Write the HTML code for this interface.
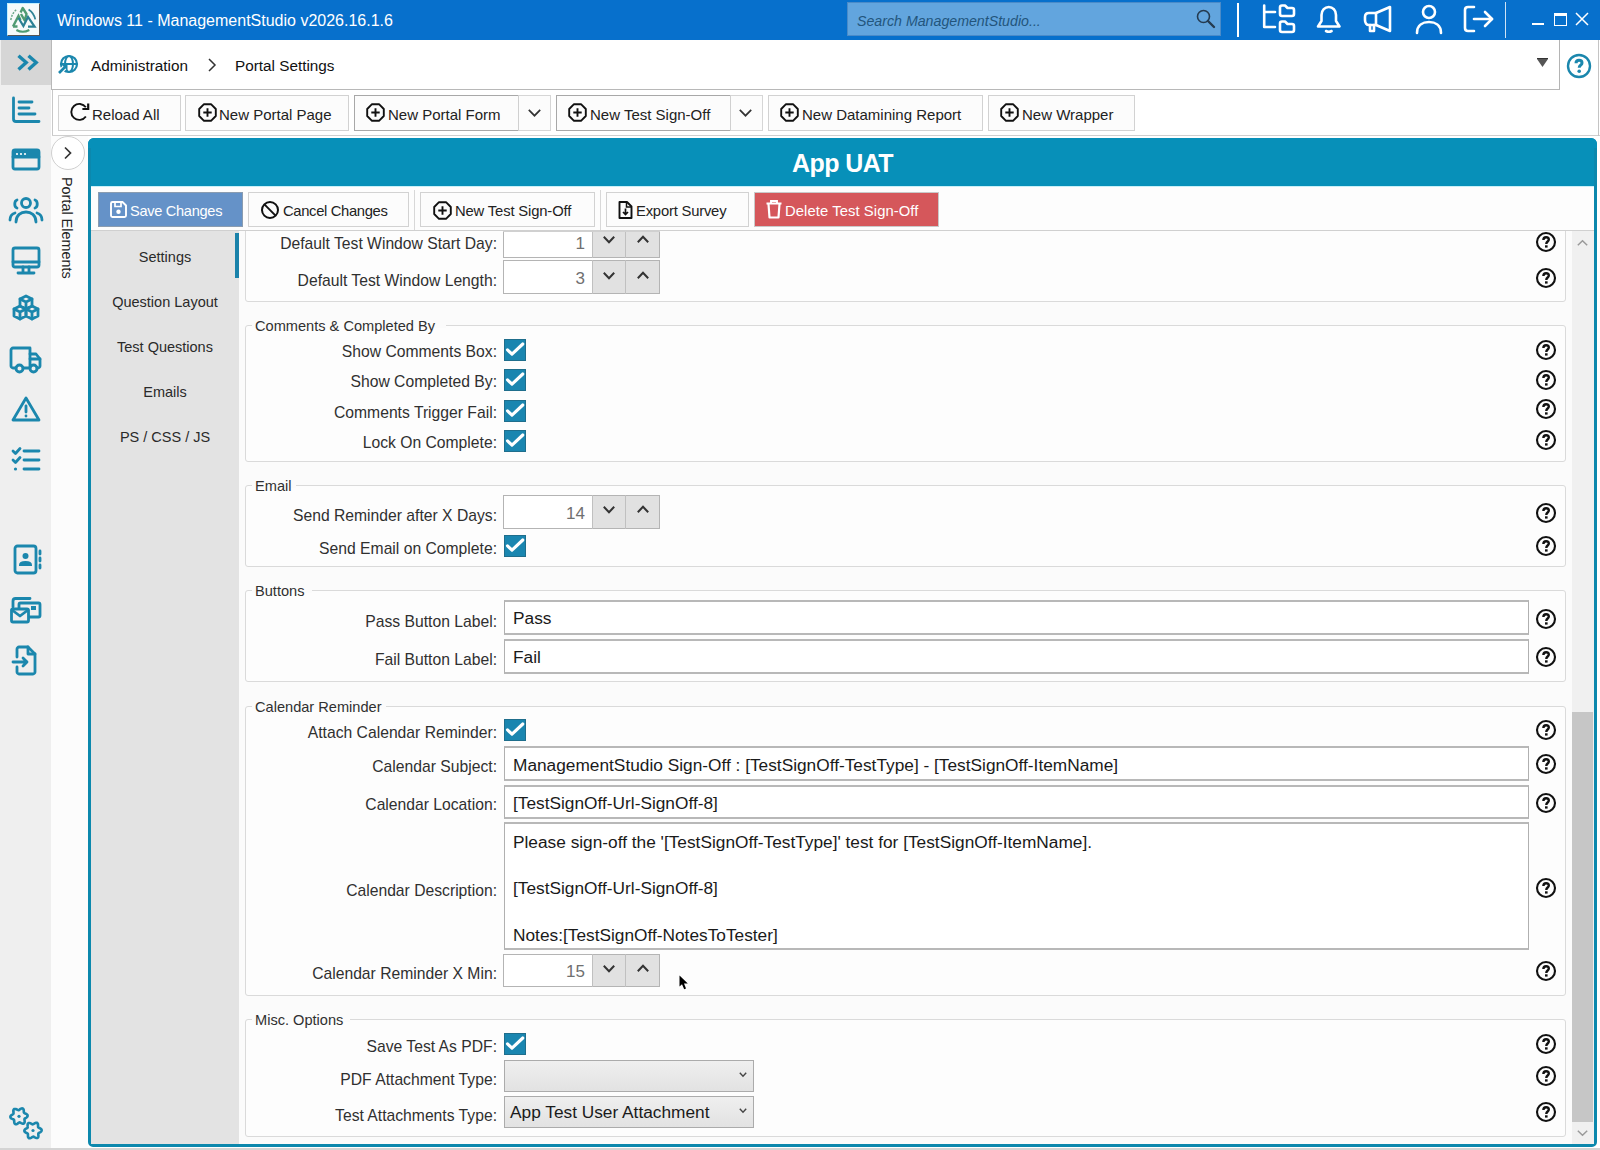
<!DOCTYPE html>
<html><head><meta charset="utf-8">
<style>
*{box-sizing:border-box;margin:0;padding:0}
html,body{width:1600px;height:1150px;overflow:hidden;background:#fff;font-family:"Liberation Sans",sans-serif;color:#222;font-size:15px}
.a{position:absolute}
svg.i{position:absolute;overflow:visible}
.t{position:absolute;white-space:nowrap;line-height:1}
#title{left:0;top:0;width:1600px;height:40px;background:#0770cc}
#sidebar{left:0;top:40px;width:51px;height:1110px;background:#efefef}
#sbtop{left:1px;top:40px;width:50px;height:45px;background:#d6d6d6}
#crumb{left:51px;top:40px;width:1509px;height:50px;background:#fff;border-bottom:1px solid #b8b8b8;border-left:1px solid #b8b8b8}
#toolbar{left:52px;top:90px;width:1548px;height:45px;background:#fff;border-left:1px solid #c8c8c8}
.tb{position:absolute;top:95px;height:36px;border:1px solid #d4d4d4;background:#fff}
</style></head><body>

<div id="title" class="a"></div>
<div class="a" style="left:7px;top:3px;width:33px;height:33px;background:#f6fafa;border-top:1px solid #bfefff;border-left:1px solid #bfefff;border-right:1px solid #555;border-bottom:1px solid #555"></div>
<svg class="i" style="left:7px;top:3px" width="32" height="32" viewBox="0 0 32 32">
<path d="M3.8 17 Q5 10 9.4 6.8" fill="none" stroke="#6aa889" stroke-width="1.5" stroke-dasharray="2 1.2"/>
<path d="M21.6 6.4 Q27 10 28.3 16.4" fill="none" stroke="#2f8496" stroke-width="1.8"/>
<path d="M6 23.5 H10.5 M6 23.5 L11.5 13 L13.5 17" fill="none" stroke="#4f9b72" stroke-width="2.4"/>
<path d="M13.6 9.5 L15.7 5 L19.5 11 L17.7 17.5 L14 11" fill="none" stroke="#4f9b72" stroke-width="2.4" stroke-linejoin="round"/>
<path d="M11.5 15 L16.4 23 L21 14 L27.6 23.6 H21" fill="none" stroke="#2a8094" stroke-width="2.2"/>
<path d="M9.4 27 Q15.7 30.5 22.3 27" fill="none" stroke="#4f9b72" stroke-width="2.2"/>
</svg>
<div class="t" style="left:57px;top:13px;font-size:16px;color:#fff">Windows 11 - ManagementStudio v2026.16.1.6</div>
<div class="a" style="left:847px;top:2px;width:374px;height:34px;background:#62a5de;border:1px solid #4b8bc8"></div>
<div class="t" style="left:857px;top:14px;font-size:14.2px;font-style:italic;color:#22557c">Search ManagementStudio...</div>
<svg class="i" style="left:1195px;top:8px" width="22" height="22" viewBox="0 0 22 22">
<circle cx="8.5" cy="8.5" r="6" fill="none" stroke="#253b50" stroke-width="1.6"/>
<path d="M13 13 L19 19" stroke="#253b50" stroke-width="2.4" stroke-linecap="round"/></svg>
<div class="a" style="left:1237px;top:3px;width:2px;height:34px;background:#fff"></div>
<div class="a" style="left:1505px;top:2px;width:1px;height:36px;background:#cfe3f5"></div>
<svg class="i" style="left:1260px;top:3px" width="36" height="32" viewBox="0 0 36 32">
<path d="M4.2 2.5 V24 H15" fill="none" stroke="#fff" stroke-width="2.6" stroke-linecap="round" stroke-linejoin="round"/><path d="M4.2 9 H15" fill="none" stroke="#fff" stroke-width="2.6" stroke-linecap="round" stroke-linejoin="round"/>
<path d="M20 4.5 Q20 2.5 22 2.5 H25 L27.5 5 H32 Q34 5 34 7 V11 Q34 13 32 13 H22 Q20 13 20 11 Z" fill="none" stroke="#fff" stroke-width="2.6" stroke-linecap="round" stroke-linejoin="round"/>
<path d="M20 20.5 Q20 18.5 22 18.5 H25 L27.5 21 H32 Q34 21 34 23 V27 Q34 29 32 29 H22 Q20 29 20 27 Z" fill="none" stroke="#fff" stroke-width="2.6" stroke-linecap="round" stroke-linejoin="round"/>
</svg>
<svg class="i" style="left:1314px;top:4px" width="30" height="30" viewBox="0 0 30 30">
<path d="M4 22.5 L7.5 17 V11 C7.5 6 11 3 14.8 3 C18.6 3 22 6 22 11 V17 L25.5 22.5 Z" fill="none" stroke="#fff" stroke-width="2.6" stroke-linecap="round" stroke-linejoin="round"/>
<path d="M12 27 Q14.8 28.5 17.6 27" fill="none" stroke="#fff" stroke-width="2.6" stroke-linecap="round" stroke-linejoin="round"/></svg>
<svg class="i" style="left:1362px;top:4px" width="32" height="30" viewBox="0 0 32 30">
<path d="M28 3 V27 L14 21 H7 C4.5 21 3 19 3 16 V13 C3 10 4.5 9 7 9 H14 Z" fill="none" stroke="#fff" stroke-width="2.6" stroke-linecap="round" stroke-linejoin="round"/>
<path d="M14 9 V21" fill="none" stroke="#fff" stroke-width="2.6" stroke-linecap="round" stroke-linejoin="round"/><path d="M8 21 V27 H12 V21" fill="none" stroke="#fff" stroke-width="2.6" stroke-linecap="round" stroke-linejoin="round"/></svg>
<svg class="i" style="left:1414px;top:3px" width="30" height="32" viewBox="0 0 30 32">
<circle cx="15" cy="9" r="6" fill="none" stroke="#fff" stroke-width="2.6" stroke-linecap="round" stroke-linejoin="round"/>
<path d="M3 30 C3 22 9 19 15 19 C21 19 27 22 27 30" fill="none" stroke="#fff" stroke-width="2.6" stroke-linecap="round" stroke-linejoin="round"/></svg>
<svg class="i" style="left:1462px;top:4px" width="34" height="30" viewBox="0 0 34 30">
<path d="M12 3 H6 C4 3 3 4 3 6 V24 C3 26 4 27 6 27 H12" fill="none" stroke="#fff" stroke-width="2.6" stroke-linecap="round" stroke-linejoin="round"/>
<path d="M12 15 H30" fill="none" stroke="#fff" stroke-width="2.6" stroke-linecap="round" stroke-linejoin="round"/><path d="M23 8 L30 15 L23 22" fill="none" stroke="#fff" stroke-width="2.6" stroke-linecap="round" stroke-linejoin="round"/></svg>
<div class="a" style="left:1532px;top:23px;width:12px;height:2px;background:#fff"></div>
<div class="a" style="left:1554px;top:13px;width:13px;height:13px;border:1.3px solid #fff;border-top-width:3px"></div>
<svg class="i" style="left:1575px;top:12px" width="14" height="14" viewBox="0 0 14 14">
<path d="M1 1 L13 13 M13 1 L1 13" stroke="#fff" stroke-width="1.5"/></svg>
<div id="sidebar" class="a"></div><div id="sbtop" class="a"></div>
<svg class="i" style="left:16px;top:54px" width="24" height="18" viewBox="0 0 24 18">
<path d="M2.5 1.8 L10.2 8.6 L2.5 15.4 M12.5 1.8 L20.2 8.6 L12.5 15.4" fill="none" stroke="#1b87ad" stroke-width="3.4" stroke-linejoin="miter"/></svg>
<svg class="i" style="left:11px;top:96px" width="30" height="28" viewBox="0 0 30 28">
<path d="M2.5 2 V23 C2.5 24.5 3.5 25.5 5 25.5 H28" fill="none" stroke="#1b87ad" stroke-width="2.8" stroke-linecap="round" stroke-linejoin="round"/>
<path d="M8 6 H21 M8 12 H18 M8 18 H24" fill="none" stroke="#1b87ad" stroke-width="2.8" stroke-linecap="round" stroke-linejoin="round"/></svg>
<svg class="i" style="left:11px;top:148px" width="30" height="24" viewBox="0 0 30 24">
<rect x="2" y="2" width="26" height="19" rx="2" fill="none" stroke="#1b87ad" stroke-width="2.8" stroke-linecap="round" stroke-linejoin="round"/>
<path d="M2 9 H28" fill="none" stroke="#1b87ad" stroke-width="2.8" stroke-linecap="round" stroke-linejoin="round"/><rect x="3" y="3" width="24" height="6" fill="#1b87ad"/>
<circle cx="6" cy="6" r="1.1" fill="#fff"/><circle cx="10" cy="6" r="1.1" fill="#fff"/><circle cx="14" cy="6" r="1.1" fill="#fff"/></svg>
<svg class="i" style="left:7px;top:195px" width="38" height="30" viewBox="0 0 38 30">
<circle cx="19" cy="8" r="4.5" fill="none" stroke="#1b87ad" stroke-width="2.8" stroke-linecap="round" stroke-linejoin="round"/>
<path d="M9 27 C9 20 14 17 19 17 C24 17 29 20 29 27" fill="none" stroke="#1b87ad" stroke-width="2.8" stroke-linecap="round" stroke-linejoin="round"/>
<path d="M10 5 C7 6 7 12 10 13" fill="none" stroke="#1b87ad" stroke-width="2.8" stroke-linecap="round" stroke-linejoin="round"/><path d="M28 5 C31 6 31 12 28 13" fill="none" stroke="#1b87ad" stroke-width="2.8" stroke-linecap="round" stroke-linejoin="round"/>
<path d="M3 25 C3 21 5 19 8 18" fill="none" stroke="#1b87ad" stroke-width="2.8" stroke-linecap="round" stroke-linejoin="round"/><path d="M35 25 C35 21 33 19 30 18" fill="none" stroke="#1b87ad" stroke-width="2.8" stroke-linecap="round" stroke-linejoin="round"/></svg>
<svg class="i" style="left:11px;top:246px" width="30" height="30" viewBox="0 0 30 30">
<rect x="2" y="2" width="26" height="19" rx="2" fill="none" stroke="#1b87ad" stroke-width="2.8" stroke-linecap="round" stroke-linejoin="round"/><path d="M2 16 H28" fill="none" stroke="#1b87ad" stroke-width="2.8" stroke-linecap="round" stroke-linejoin="round"/>
<path d="M12 21 V26 M18 21 V26 M7 27 H23" fill="none" stroke="#1b87ad" stroke-width="2.8" stroke-linecap="round" stroke-linejoin="round"/></svg>
<svg class="i" style="left:11px;top:294px" width="30" height="30" viewBox="0 0 30 30">
<path d="M15 2 L21 5 V12 L15 15 L9 12 V5 Z" fill="none" stroke="#1b87ad" stroke-width="2.8" stroke-linecap="round" stroke-linejoin="round"/><path d="M9 5 L15 8 L21 5 M15 8 V15" fill="none" stroke="#1b87ad" stroke-width="2.8" stroke-linecap="round" stroke-linejoin="round"/>
<path d="M9 12 L15 15 V22 L9 25 L3 22 V15 Z" fill="none" stroke="#1b87ad" stroke-width="2.8" stroke-linecap="round" stroke-linejoin="round"/><path d="M3 15 L9 18 L15 15 M9 18 V25" fill="none" stroke="#1b87ad" stroke-width="2.8" stroke-linecap="round" stroke-linejoin="round"/>
<path d="M21 12 L27 15 V22 L21 25 L15 22 V15 Z" fill="none" stroke="#1b87ad" stroke-width="2.8" stroke-linecap="round" stroke-linejoin="round"/><path d="M15 15 L21 18 L27 15 M21 18 V25" fill="none" stroke="#1b87ad" stroke-width="2.8" stroke-linecap="round" stroke-linejoin="round"/></svg>
<svg class="i" style="left:9px;top:346px" width="34" height="30" viewBox="0 0 34 30">
<path d="M7 22 H4 C3 22 2 21 2 20 V4 C2 3 3 2 4 2 H21 V22 H14" fill="none" stroke="#1b87ad" stroke-width="2.8" stroke-linecap="round" stroke-linejoin="round"/>
<path d="M21 8 H27 L31 13 V20 C31 21 30 22 29 22 H28" fill="none" stroke="#1b87ad" stroke-width="2.8" stroke-linecap="round" stroke-linejoin="round"/><path d="M21 13 H31" fill="none" stroke="#1b87ad" stroke-width="2.8" stroke-linecap="round" stroke-linejoin="round"/>
<circle cx="10.5" cy="22.5" r="3.5" fill="none" stroke="#1b87ad" stroke-width="2.8" stroke-linecap="round" stroke-linejoin="round"/><circle cx="24.5" cy="22.5" r="3.5" fill="none" stroke="#1b87ad" stroke-width="2.8" stroke-linecap="round" stroke-linejoin="round"/></svg>
<svg class="i" style="left:11px;top:395px" width="30" height="28" viewBox="0 0 30 28">
<path d="M15 3 L28 25 H2 Z" fill="none" stroke="#1b87ad" stroke-width="2.8" stroke-linecap="round" stroke-linejoin="round"/><path d="M15 11 V17" fill="none" stroke="#1b87ad" stroke-width="2.8" stroke-linecap="round" stroke-linejoin="round"/><circle cx="15" cy="21" r="1.4" fill="#1b87ad"/></svg>
<svg class="i" style="left:11px;top:446px" width="30" height="28" viewBox="0 0 30 28">
<path d="M2 5 L4.5 7.5 L9 2.5 M2 14 L4.5 16.5 L9 11.5" fill="none" stroke="#1b87ad" stroke-width="2.8" stroke-linecap="round" stroke-linejoin="round"/><circle cx="4.5" cy="23" r="1.6" fill="#1b87ad"/>
<path d="M13 5 H28 M13 14 H28 M13 23 H28" fill="none" stroke="#1b87ad" stroke-width="2.8" stroke-linecap="round" stroke-linejoin="round"/></svg>
<svg class="i" style="left:13px;top:544px" width="30" height="32" viewBox="0 0 30 32">
<rect x="2" y="2" width="21" height="27" rx="2.5" fill="none" stroke="#1b87ad" stroke-width="2.8" stroke-linecap="round" stroke-linejoin="round"/>
<circle cx="12.5" cy="12" r="3" fill="#1b87ad"/><path d="M7 21 C7 17 18 17 18 21 Z" fill="#1b87ad" stroke="#1b87ad" stroke-width="2"/>
<path d="M27 7 V10 M27 14 V17 M27 21 V24" fill="none" stroke="#1b87ad" stroke-width="2.8" stroke-linecap="round" stroke-linejoin="round"/></svg>
<svg class="i" style="left:9px;top:595px" width="34" height="30" viewBox="0 0 34 30">
<path d="M4 12 V6 C4 4.5 5 3.5 6.5 3.5 H21" fill="none" stroke="#1b87ad" stroke-width="2.8" stroke-linecap="round" stroke-linejoin="round"/>
<rect x="10" y="8" width="21" height="14" rx="1.5" fill="none" stroke="#1b87ad" stroke-width="2.8" stroke-linecap="round" stroke-linejoin="round"/>
<rect x="2.5" y="14" width="17" height="13" rx="1.5" fill="#efefef" stroke="#1b87ad" stroke-width="2.8"/>
<path d="M3 15 L11 21 L19 15" fill="none" stroke="#1b87ad" stroke-width="2.8" stroke-linecap="round" stroke-linejoin="round"/><rect x="22" y="11" width="5" height="4" fill="#1b87ad"/></svg>
<svg class="i" style="left:11px;top:645px" width="28" height="32" viewBox="0 0 28 32">
<path d="M6 12 V4 C6 3 7 2 8 2 H17 L24 9 V27 C24 28 23 29 22 29 H8 C7 29 6 28 6 27 V22" fill="none" stroke="#1b87ad" stroke-width="2.8" stroke-linecap="round" stroke-linejoin="round"/>
<path d="M17 2 V9 H24" fill="none" stroke="#1b87ad" stroke-width="2.8" stroke-linecap="round" stroke-linejoin="round"/><path d="M2 17 H16 M12 13 L16 17 L12 21" fill="none" stroke="#1b87ad" stroke-width="2.8" stroke-linecap="round" stroke-linejoin="round"/></svg>
<svg class="i" style="left:0px;top:1100px" width="50" height="48" viewBox="0 0 50 48">
<path d="M27.50 16.30 L27.25 16.73 L26.89 17.13 L26.47 17.48 L26.01 17.79 L25.57 18.06 L25.17 18.31 L24.85 18.55 L24.63 18.81 L24.50 19.10 L24.46 19.45 L24.49 19.86 L24.55 20.34 L24.63 20.86 L24.67 21.41 L24.66 21.96 L24.56 22.47 L24.37 22.93 L24.08 23.29 L23.70 23.54 L23.25 23.66 L22.75 23.66 L22.23 23.55 L21.71 23.36 L21.22 23.12 L20.76 22.87 L20.35 22.65 L19.98 22.49 L19.64 22.43 L19.32 22.46 L19.00 22.60 L18.66 22.83 L18.28 23.13 L17.87 23.45 L17.41 23.76 L16.93 24.03 L16.43 24.20 L15.94 24.26 L15.49 24.19 L15.08 23.99 L14.75 23.66 L14.50 23.23 L14.34 22.72 L14.24 22.18 L14.20 21.63 L14.19 21.11 L14.18 20.64 L14.13 20.25 L14.02 19.92 L13.82 19.66 L13.54 19.45 L13.17 19.27 L12.73 19.09 L12.24 18.89 L11.74 18.66 L11.27 18.37 L10.87 18.03 L10.58 17.63 L10.41 17.20 L10.38 16.75 L10.50 16.30 L10.75 15.87 L11.11 15.47 L11.53 15.12 L11.99 14.81 L12.43 14.54 L12.83 14.29 L13.15 14.05 L13.37 13.79 L13.50 13.50 L13.54 13.15 L13.51 12.74 L13.45 12.26 L13.37 11.74 L13.33 11.19 L13.34 10.64 L13.44 10.13 L13.63 9.67 L13.92 9.31 L14.30 9.06 L14.75 8.94 L15.25 8.94 L15.77 9.05 L16.29 9.24 L16.78 9.48 L17.24 9.73 L17.65 9.95 L18.02 10.11 L18.36 10.17 L18.68 10.14 L19.00 10.00 L19.34 9.77 L19.72 9.47 L20.13 9.15 L20.59 8.84 L21.07 8.57 L21.57 8.40 L22.06 8.34 L22.51 8.41 L22.92 8.61 L23.25 8.94 L23.50 9.37 L23.66 9.88 L23.76 10.42 L23.80 10.97 L23.81 11.49 L23.82 11.96 L23.87 12.35 L23.98 12.68 L24.18 12.94 L24.46 13.15 L24.83 13.33 L25.27 13.51 L25.76 13.71 L26.26 13.94 L26.73 14.23 L27.13 14.57 L27.42 14.97 L27.59 15.40 L27.62 15.85 Z" fill="none" stroke="#1b87ad" stroke-width="2.6"/>
<circle cx="19" cy="16.3" r="1.6" fill="#1b87ad"/>
<path d="M41.63 30.50 L41.48 30.94 L41.20 31.36 L40.82 31.74 L40.38 32.07 L39.91 32.35 L39.45 32.60 L39.05 32.82 L38.72 33.05 L38.49 33.30 L38.35 33.59 L38.29 33.94 L38.30 34.35 L38.35 34.83 L38.39 35.36 L38.41 35.91 L38.36 36.46 L38.24 36.97 L38.02 37.41 L37.71 37.75 L37.31 37.97 L36.85 38.06 L36.35 38.03 L35.84 37.89 L35.33 37.67 L34.85 37.41 L34.41 37.14 L34.01 36.90 L33.65 36.73 L33.32 36.65 L33.00 36.67 L32.67 36.80 L32.31 37.02 L31.92 37.30 L31.49 37.60 L31.02 37.89 L30.52 38.12 L30.02 38.27 L29.53 38.30 L29.08 38.20 L28.69 37.97 L28.38 37.62 L28.15 37.17 L28.02 36.65 L27.95 36.11 L27.94 35.56 L27.96 35.04 L27.96 34.58 L27.93 34.18 L27.84 33.85 L27.65 33.59 L27.38 33.37 L27.01 33.17 L26.58 32.97 L26.10 32.74 L25.61 32.48 L25.16 32.17 L24.78 31.80 L24.51 31.39 L24.37 30.95 L24.37 30.50 L24.52 30.06 L24.80 29.64 L25.18 29.26 L25.62 28.93 L26.09 28.65 L26.55 28.40 L26.95 28.18 L27.28 27.95 L27.51 27.70 L27.65 27.41 L27.71 27.06 L27.70 26.65 L27.65 26.17 L27.61 25.64 L27.59 25.09 L27.64 24.54 L27.76 24.03 L27.98 23.59 L28.29 23.25 L28.69 23.03 L29.15 22.94 L29.65 22.97 L30.16 23.11 L30.67 23.33 L31.15 23.59 L31.59 23.86 L31.99 24.10 L32.35 24.27 L32.68 24.35 L33.00 24.33 L33.33 24.20 L33.69 23.98 L34.08 23.70 L34.51 23.40 L34.98 23.11 L35.48 22.88 L35.98 22.73 L36.47 22.70 L36.92 22.80 L37.31 23.03 L37.62 23.38 L37.85 23.83 L37.98 24.35 L38.05 24.89 L38.06 25.44 L38.04 25.96 L38.04 26.42 L38.07 26.82 L38.16 27.15 L38.35 27.41 L38.62 27.63 L38.99 27.83 L39.42 28.03 L39.90 28.26 L40.39 28.52 L40.84 28.83 L41.22 29.20 L41.49 29.61 L41.63 30.05 Z" fill="none" stroke="#1b87ad" stroke-width="2.6"/>
<circle cx="33" cy="30.5" r="1.6" fill="#1b87ad"/></svg>
<div id="crumb" class="a"></div><div id="toolbar" class="a"></div>
<svg class="i" style="left:56px;top:52px" width="26" height="24" viewBox="0 0 26 24">
<circle cx="13" cy="12" r="8" fill="none" stroke="#1b87ad" stroke-width="2.2"/>
<ellipse cx="13" cy="12" rx="4" ry="8" fill="none" stroke="#1b87ad" stroke-width="2"/>
<path d="M5 12 H21" stroke="#1b87ad" stroke-width="2"/>
<path d="M3 21 L9.5 14.5" stroke="#fff" stroke-width="5"/>
<path d="M3 21 L9.5 14.5" stroke="#1b87ad" stroke-width="2.6"/>
<path d="M5.5 12.5 L11.5 12.5 L11.5 18.5 Z" fill="#1b87ad"/></svg>
<div class="t" style="left:91px;top:58px;font-size:15.3px;color:#111">Administration</div>
<svg class="i" style="left:207px;top:58px" width="10" height="14" viewBox="0 0 10 14"><path d="M2 1 L8 7 L2 13" fill="none" stroke="#333" stroke-width="1.5"/></svg>
<div class="t" style="left:235px;top:58px;font-size:15.3px;color:#111">Portal Settings</div>
<svg class="i" style="left:1536px;top:58px" width="13" height="10" viewBox="0 0 13 10"><path d="M1 1 H12 L6.5 9 Z" fill="#555"/><path d="M1 0.5 H12" stroke="#333"/></svg>
<div class="a" style="left:1559px;top:40px;width:1px;height:49px;background:#b4b4b4"></div>
<svg class="i" style="left:1566px;top:53px" width="26" height="26" viewBox="0 0 26 26">
<circle cx="13" cy="13" r="11" fill="none" stroke="#1b87ad" stroke-width="2.4"/>
<path d="M10 10.3 C10 8.2 11.3 7.2 13 7.2 C14.8 7.2 16 8.3 16 9.9 C16 12.2 13.2 12.3 13.2 14.8" fill="none" stroke="#1b87ad" stroke-width="3"/>
<circle cx="13.2" cy="18.3" r="1.8" fill="#1b87ad"/></svg>
<div class="a" style="left:58px;top:95px;width:123px;height:36px;border:1px solid #d2d2d2;background:#fcfcfc"></div>
<svg class="i" style="left:70px;top:103px" width="20" height="20" viewBox="0 0 20 20"><path d="M15.85 4.31 A8 8 0 1 0 15.85 13.49" fill="none" stroke="#111" stroke-width="1.9"/><path d="M18.2 0.6 V6 H12.4" fill="none" stroke="#111" stroke-width="2.2" stroke-linejoin="miter"/></svg>
<div class="t" style="left:92px;top:107.30px;font-size:15px;color:#222;">Reload All</div>
<div class="a" style="left:185px;top:95px;width:164px;height:36px;border:1px solid #d2d2d2;background:#fcfcfc"></div>
<svg class="i" style="left:198px;top:103px" width="19" height="19" viewBox="0 0 19 19"><path d="M6 1.2 H13 L17.8 6 V13 L13 17.8 H6 L1.2 13 V6 Z" fill="none" stroke="#111" stroke-width="1.9" stroke-linejoin="round"/><path d="M9.5 5.3 V13.7 M5.3 9.5 H13.7" stroke="#111" stroke-width="1.9"/></svg>
<div class="t" style="left:219px;top:107.30px;font-size:15px;color:#222;">New Portal Page</div>
<div class="a" style="left:354px;top:95px;width:197px;height:36px;border:1px solid #d6d6d6;background:#fcfcfc"></div>
<div class="a" style="left:354px;top:95px;width:165px;height:36px;border:1px solid #a8a8a8;border-right:none"></div>
<div class="a" style="left:518px;top:95px;width:1px;height:36px;background:#d0d0d0"></div>
<svg class="i" style="left:366px;top:103px" width="19" height="19" viewBox="0 0 19 19"><path d="M6 1.2 H13 L17.8 6 V13 L13 17.8 H6 L1.2 13 V6 Z" fill="none" stroke="#111" stroke-width="1.9" stroke-linejoin="round"/><path d="M9.5 5.3 V13.7 M5.3 9.5 H13.7" stroke="#111" stroke-width="1.9"/></svg>
<div class="t" style="left:388px;top:107.30px;font-size:15px;color:#222;">New Portal Form</div>
<svg class="i" style="left:527.5px;top:108.75px" width="13" height="7.5" viewBox="0 0 13 7.5"><path d="M0.8 0.8 L6.5 6.7 L12.2 0.8" fill="none" stroke="#333" stroke-width="1.7"/></svg>
<div class="a" style="left:556px;top:95px;width:207px;height:36px;border:1px solid #d6d6d6;background:#fcfcfc"></div>
<div class="a" style="left:556px;top:95px;width:175px;height:36px;border:1px solid #a8a8a8;border-right:none"></div>
<div class="a" style="left:730px;top:95px;width:1px;height:36px;background:#d0d0d0"></div>
<svg class="i" style="left:568px;top:103px" width="19" height="19" viewBox="0 0 19 19"><path d="M6 1.2 H13 L17.8 6 V13 L13 17.8 H6 L1.2 13 V6 Z" fill="none" stroke="#111" stroke-width="1.9" stroke-linejoin="round"/><path d="M9.5 5.3 V13.7 M5.3 9.5 H13.7" stroke="#111" stroke-width="1.9"/></svg>
<div class="t" style="left:590px;top:107.30px;font-size:15px;color:#222;">New Test Sign-Off</div>
<svg class="i" style="left:738.5px;top:108.75px" width="13" height="7.5" viewBox="0 0 13 7.5"><path d="M0.8 0.8 L6.5 6.7 L12.2 0.8" fill="none" stroke="#333" stroke-width="1.7"/></svg>
<div class="a" style="left:768px;top:95px;width:215px;height:36px;border:1px solid #d2d2d2;background:#fcfcfc"></div>
<svg class="i" style="left:780px;top:103px" width="19" height="19" viewBox="0 0 19 19"><path d="M6 1.2 H13 L17.8 6 V13 L13 17.8 H6 L1.2 13 V6 Z" fill="none" stroke="#111" stroke-width="1.9" stroke-linejoin="round"/><path d="M9.5 5.3 V13.7 M5.3 9.5 H13.7" stroke="#111" stroke-width="1.9"/></svg>
<div class="t" style="left:802px;top:107.30px;font-size:15px;color:#222;">New Datamining Report</div>
<div class="a" style="left:988px;top:95px;width:147px;height:36px;border:1px solid #d2d2d2;background:#fcfcfc"></div>
<svg class="i" style="left:1000px;top:103px" width="19" height="19" viewBox="0 0 19 19"><path d="M6 1.2 H13 L17.8 6 V13 L13 17.8 H6 L1.2 13 V6 Z" fill="none" stroke="#111" stroke-width="1.9" stroke-linejoin="round"/><path d="M9.5 5.3 V13.7 M5.3 9.5 H13.7" stroke="#111" stroke-width="1.9"/></svg>
<div class="t" style="left:1022px;top:107.30px;font-size:15px;color:#222;">New Wrapper</div>
<div class="a" style="left:52px;top:135px;width:1548px;height:1px;background:#cfcfcf"></div>
<div class="a" style="left:51px;top:136px;width:37px;height:1012px;background:#fcfcfc"></div>
<div class="a" style="left:51px;top:136px;width:34px;height:34px;border:1px solid #cfcfcf;border-radius:50%;background:#fff"></div>
<svg class="i" style="left:63px;top:146px" width="10" height="14" viewBox="0 0 10 14"><path d="M2 1.5 L7.5 7 L2 12.5" fill="none" stroke="#333" stroke-width="1.7"/></svg>
<div class="t" style="left:60px;top:177px;font-size:14.4px;color:#222;transform-origin:0 0;transform:rotate(90deg) translate(0,-14px)">Portal Elements</div>
<div class="a" style="left:88px;top:138px;width:1509px;height:1009px;border:3px solid #0c88ad;border-radius:6px 6px 5px 5px;background:#fff"></div>
<div class="a" style="left:0px;top:1148px;width:1600px;height:2px;background:#d4d4d4"></div>
<div class="a" style="left:1598px;top:40px;width:1px;height:96px;background:#c4c4c4"></div>
<div class="a" style="left:91px;top:141px;width:1503px;height:45px;background:#0790b9"></div>
<div class="a" style="left:88px;top:138px;width:1509px;height:10px;background:#0790b9;border-radius:6px 6px 0 0"></div>
<div class="t" style="left:442.5px;width:800px;text-align:center;top:150.84px;font-size:25px;color:#fff;font-weight:bold;letter-spacing:-0.6px">App UAT</div>
<div class="a" style="left:91px;top:186px;width:1503px;height:1px;background:#c8f0f8"></div>
<div class="a" style="left:91px;top:231px;width:148px;height:913px;background:#e3e3e3"></div>
<div class="a" style="left:235px;top:233px;width:4px;height:45px;background:#1a82aa"></div>
<div class="t" style="left:-235px;width:800px;text-align:center;top:249.73px;font-size:14.5px;color:#2a2a2a;">Settings</div>
<div class="t" style="left:-235px;width:800px;text-align:center;top:294.73px;font-size:14.5px;color:#2a2a2a;">Question Layout</div>
<div class="t" style="left:-235px;width:800px;text-align:center;top:339.73px;font-size:14.5px;color:#2a2a2a;">Test Questions</div>
<div class="t" style="left:-235px;width:800px;text-align:center;top:384.73px;font-size:14.5px;color:#2a2a2a;">Emails</div>
<div class="t" style="left:-235px;width:800px;text-align:center;top:429.73px;font-size:14.5px;color:#2a2a2a;">PS / CSS / JS</div>
<div class="a" style="left:239px;top:231px;width:1333px;height:913px;background:#fbfbfb"></div>
<div class="a" style="left:1572px;top:231px;width:22px;height:913px;background:#f0f0f0"></div>
<div class="a" style="left:1572px;top:712px;width:21px;height:410px;background:#c6c6c6"></div>
<svg class="i" style="left:1576.5px;top:240.0px" width="11" height="6" viewBox="0 0 11 6"><path d="M0.8 5.2 L5.5 0.8 L10.2 5.2" fill="none" stroke="#9a9a9a" stroke-width="1.5"/></svg>
<svg class="i" style="left:1576.5px;top:1130.0px" width="11" height="6" viewBox="0 0 11 6"><path d="M0.8 0.8 L5.5 5.2 L10.2 0.8" fill="none" stroke="#9a9a9a" stroke-width="1.5"/></svg>
<div class="a" style="left:245px;top:200px;width:1321px;height:102px;border:1px solid #dadada;border-radius:3px;background:#fdfdfd"></div>
<div class="t" style="right:1103px;top:236.41px;font-size:15.7px;color:#303030;">Default Test Window Start Day:</div>
<div class="a" style="left:503px;top:225px;width:157px;height:33px;border:1px solid #b4b4b4;background:#fff"></div>
<div class="a" style="left:592px;top:226px;width:67px;height:31px;background:#e1e1e1"></div>
<div class="a" style="left:592px;top:225px;width:1px;height:33px;background:#c0c0c0"></div>
<div class="a" style="left:625px;top:225px;width:1px;height:33px;background:#c0c0c0"></div>
<div class="t" style="right:1015px;top:234.61px;font-size:17px;color:#707070;">1</div>
<svg class="i" style="left:603.0px;top:236.0px" width="12" height="7" viewBox="0 0 12 7"><path d="M0.8 0.8 L6.0 6.2 L11.2 0.8" fill="none" stroke="#333" stroke-width="2"/></svg>
<svg class="i" style="left:636.5px;top:236.0px" width="12" height="7" viewBox="0 0 12 7"><path d="M0.8 6.2 L6.0 0.8 L11.2 6.2" fill="none" stroke="#333" stroke-width="2"/></svg>
<div class="a" style="left:503px;top:231px;width:157px;height:1px;background:#d0d0d0"></div>
<div class="t" style="right:1103px;top:272.71px;font-size:15.7px;color:#303030;">Default Test Window Length:</div>
<div class="a" style="left:503px;top:260px;width:157px;height:34px;border:1px solid #b4b4b4;background:#fff"></div>
<div class="a" style="left:592px;top:261px;width:67px;height:32px;background:#e1e1e1"></div>
<div class="a" style="left:592px;top:260px;width:1px;height:34px;background:#c0c0c0"></div>
<div class="a" style="left:625px;top:260px;width:1px;height:34px;background:#c0c0c0"></div>
<div class="t" style="right:1015px;top:270.11px;font-size:17px;color:#707070;">3</div>
<svg class="i" style="left:603.0px;top:271.5px" width="12" height="7" viewBox="0 0 12 7"><path d="M0.8 0.8 L6.0 6.2 L11.2 0.8" fill="none" stroke="#333" stroke-width="2"/></svg>
<svg class="i" style="left:636.5px;top:271.5px" width="12" height="7" viewBox="0 0 12 7"><path d="M0.8 6.2 L6.0 0.8 L11.2 6.2" fill="none" stroke="#333" stroke-width="2"/></svg>
<svg class="i" style="left:1534.7px;top:230.5px" width="22" height="22" viewBox="0 0 22 22"><circle cx="11" cy="11" r="9" fill="none" stroke="#111" stroke-width="2.1"/><path d="M8.4 9 C8.4 7.1 9.5 6.2 11.1 6.2 C12.7 6.2 13.8 7.1 13.8 8.6 C13.8 10.5 11.3 10.6 11.3 12.9" fill="none" stroke="#111" stroke-width="2.4"/><rect x="10" y="14.3" width="2.6" height="2.3" fill="#111"/></svg>
<svg class="i" style="left:1534.7px;top:266.5px" width="22" height="22" viewBox="0 0 22 22"><circle cx="11" cy="11" r="9" fill="none" stroke="#111" stroke-width="2.1"/><path d="M8.4 9 C8.4 7.1 9.5 6.2 11.1 6.2 C12.7 6.2 13.8 7.1 13.8 8.6 C13.8 10.5 11.3 10.6 11.3 12.9" fill="none" stroke="#111" stroke-width="2.4"/><rect x="10" y="14.3" width="2.6" height="2.3" fill="#111"/></svg>
<div class="a" style="left:245px;top:325px;width:1321px;height:137px;border:1px solid #dadada;border-radius:3px;background:#fdfdfd"></div>
<div class="a" style="left:252px;top:323px;width:194px;height:5px;background:#fbfbfb"></div>
<div class="t" style="left:255px;top:318.94px;font-size:14.6px;color:#303030;">Comments &amp; Completed By</div>
<div class="t" style="right:1103px;top:344.21px;font-size:15.7px;color:#303030;">Show Comments Box:</div>
<div class="a" style="left:504px;top:339px;width:22px;height:22px;background:#1a86b0;border:1px solid #1f6e8c"></div>
<svg class="i" style="left:504px;top:339px" width="22" height="22" viewBox="0 0 22 22"><path d="M3.5 10.8 L8 15.2 L18.8 5" fill="none" stroke="#fff" stroke-width="3.1" stroke-linecap="round" stroke-linejoin="round"/></svg>
<svg class="i" style="left:1534.7px;top:338.5px" width="22" height="22" viewBox="0 0 22 22"><circle cx="11" cy="11" r="9" fill="none" stroke="#111" stroke-width="2.1"/><path d="M8.4 9 C8.4 7.1 9.5 6.2 11.1 6.2 C12.7 6.2 13.8 7.1 13.8 8.6 C13.8 10.5 11.3 10.6 11.3 12.9" fill="none" stroke="#111" stroke-width="2.4"/><rect x="10" y="14.3" width="2.6" height="2.3" fill="#111"/></svg>
<div class="t" style="right:1103px;top:374.21px;font-size:15.7px;color:#303030;">Show Completed By:</div>
<div class="a" style="left:504px;top:369px;width:22px;height:22px;background:#1a86b0;border:1px solid #1f6e8c"></div>
<svg class="i" style="left:504px;top:369px" width="22" height="22" viewBox="0 0 22 22"><path d="M3.5 10.8 L8 15.2 L18.8 5" fill="none" stroke="#fff" stroke-width="3.1" stroke-linecap="round" stroke-linejoin="round"/></svg>
<svg class="i" style="left:1534.7px;top:368.8px" width="22" height="22" viewBox="0 0 22 22"><circle cx="11" cy="11" r="9" fill="none" stroke="#111" stroke-width="2.1"/><path d="M8.4 9 C8.4 7.1 9.5 6.2 11.1 6.2 C12.7 6.2 13.8 7.1 13.8 8.6 C13.8 10.5 11.3 10.6 11.3 12.9" fill="none" stroke="#111" stroke-width="2.4"/><rect x="10" y="14.3" width="2.6" height="2.3" fill="#111"/></svg>
<div class="t" style="right:1103px;top:404.71px;font-size:15.7px;color:#303030;">Comments Trigger Fail:</div>
<div class="a" style="left:504px;top:400px;width:22px;height:22px;background:#1a86b0;border:1px solid #1f6e8c"></div>
<svg class="i" style="left:504px;top:400px" width="22" height="22" viewBox="0 0 22 22"><path d="M3.5 10.8 L8 15.2 L18.8 5" fill="none" stroke="#fff" stroke-width="3.1" stroke-linecap="round" stroke-linejoin="round"/></svg>
<svg class="i" style="left:1534.7px;top:398.3px" width="22" height="22" viewBox="0 0 22 22"><circle cx="11" cy="11" r="9" fill="none" stroke="#111" stroke-width="2.1"/><path d="M8.4 9 C8.4 7.1 9.5 6.2 11.1 6.2 C12.7 6.2 13.8 7.1 13.8 8.6 C13.8 10.5 11.3 10.6 11.3 12.9" fill="none" stroke="#111" stroke-width="2.4"/><rect x="10" y="14.3" width="2.6" height="2.3" fill="#111"/></svg>
<div class="t" style="right:1103px;top:435.21px;font-size:15.7px;color:#303030;">Lock On Complete:</div>
<div class="a" style="left:504px;top:430px;width:22px;height:22px;background:#1a86b0;border:1px solid #1f6e8c"></div>
<svg class="i" style="left:504px;top:430px" width="22" height="22" viewBox="0 0 22 22"><path d="M3.5 10.8 L8 15.2 L18.8 5" fill="none" stroke="#fff" stroke-width="3.1" stroke-linecap="round" stroke-linejoin="round"/></svg>
<svg class="i" style="left:1534.7px;top:429.3px" width="22" height="22" viewBox="0 0 22 22"><circle cx="11" cy="11" r="9" fill="none" stroke="#111" stroke-width="2.1"/><path d="M8.4 9 C8.4 7.1 9.5 6.2 11.1 6.2 C12.7 6.2 13.8 7.1 13.8 8.6 C13.8 10.5 11.3 10.6 11.3 12.9" fill="none" stroke="#111" stroke-width="2.4"/><rect x="10" y="14.3" width="2.6" height="2.3" fill="#111"/></svg>
<div class="a" style="left:245px;top:485px;width:1321px;height:82px;border:1px solid #dadada;border-radius:3px;background:#fdfdfd"></div>
<div class="a" style="left:252px;top:483px;width:44px;height:5px;background:#fbfbfb"></div>
<div class="t" style="left:255px;top:478.94px;font-size:14.6px;color:#303030;">Email</div>
<div class="t" style="right:1103px;top:507.71px;font-size:15.7px;color:#303030;">Send Reminder after X Days:</div>
<div class="a" style="left:503px;top:494.5px;width:157px;height:34px;border:1px solid #b4b4b4;background:#fff"></div>
<div class="a" style="left:592px;top:495.5px;width:67px;height:32px;background:#e1e1e1"></div>
<div class="a" style="left:592px;top:494.5px;width:1px;height:34px;background:#c0c0c0"></div>
<div class="a" style="left:625px;top:494.5px;width:1px;height:34px;background:#c0c0c0"></div>
<div class="t" style="right:1015px;top:504.61px;font-size:17px;color:#707070;">14</div>
<svg class="i" style="left:603.0px;top:506.0px" width="12" height="7" viewBox="0 0 12 7"><path d="M0.8 0.8 L6.0 6.2 L11.2 0.8" fill="none" stroke="#333" stroke-width="2"/></svg>
<svg class="i" style="left:636.5px;top:506.0px" width="12" height="7" viewBox="0 0 12 7"><path d="M0.8 6.2 L6.0 0.8 L11.2 6.2" fill="none" stroke="#333" stroke-width="2"/></svg>
<svg class="i" style="left:1534.7px;top:501.5px" width="22" height="22" viewBox="0 0 22 22"><circle cx="11" cy="11" r="9" fill="none" stroke="#111" stroke-width="2.1"/><path d="M8.4 9 C8.4 7.1 9.5 6.2 11.1 6.2 C12.7 6.2 13.8 7.1 13.8 8.6 C13.8 10.5 11.3 10.6 11.3 12.9" fill="none" stroke="#111" stroke-width="2.4"/><rect x="10" y="14.3" width="2.6" height="2.3" fill="#111"/></svg>
<div class="t" style="right:1103px;top:540.71px;font-size:15.7px;color:#303030;">Send Email on Complete:</div>
<div class="a" style="left:504px;top:535px;width:22px;height:22px;background:#1a86b0;border:1px solid #1f6e8c"></div>
<svg class="i" style="left:504px;top:535px" width="22" height="22" viewBox="0 0 22 22"><path d="M3.5 10.8 L8 15.2 L18.8 5" fill="none" stroke="#fff" stroke-width="3.1" stroke-linecap="round" stroke-linejoin="round"/></svg>
<svg class="i" style="left:1534.7px;top:535px" width="22" height="22" viewBox="0 0 22 22"><circle cx="11" cy="11" r="9" fill="none" stroke="#111" stroke-width="2.1"/><path d="M8.4 9 C8.4 7.1 9.5 6.2 11.1 6.2 C12.7 6.2 13.8 7.1 13.8 8.6 C13.8 10.5 11.3 10.6 11.3 12.9" fill="none" stroke="#111" stroke-width="2.4"/><rect x="10" y="14.3" width="2.6" height="2.3" fill="#111"/></svg>
<div class="a" style="left:245px;top:590px;width:1321px;height:92px;border:1px solid #dadada;border-radius:3px;background:#fdfdfd"></div>
<div class="a" style="left:252px;top:588px;width:60px;height:5px;background:#fbfbfb"></div>
<div class="t" style="left:255px;top:583.94px;font-size:14.6px;color:#303030;">Buttons</div>
<div class="t" style="right:1103px;top:613.51px;font-size:15.7px;color:#303030;">Pass Button Label:</div>
<div class="a" style="left:504px;top:600px;width:1025px;height:35px;border:1px solid #b0b0b0;border-top:2px solid #b8b8b8;border-bottom:2px solid #b8b8b8;background:#fff"></div>
<div class="t" style="left:513px;top:610.36px;font-size:17.3px;color:#1a1a1a;">Pass</div>
<svg class="i" style="left:1534.7px;top:607.7px" width="22" height="22" viewBox="0 0 22 22"><circle cx="11" cy="11" r="9" fill="none" stroke="#111" stroke-width="2.1"/><path d="M8.4 9 C8.4 7.1 9.5 6.2 11.1 6.2 C12.7 6.2 13.8 7.1 13.8 8.6 C13.8 10.5 11.3 10.6 11.3 12.9" fill="none" stroke="#111" stroke-width="2.4"/><rect x="10" y="14.3" width="2.6" height="2.3" fill="#111"/></svg>
<div class="t" style="right:1103px;top:651.71px;font-size:15.7px;color:#303030;">Fail Button Label:</div>
<div class="a" style="left:504px;top:639px;width:1025px;height:35px;border:1px solid #b0b0b0;border-top:2px solid #b8b8b8;border-bottom:2px solid #b8b8b8;background:#fff"></div>
<div class="t" style="left:513px;top:649.06px;font-size:17.3px;color:#1a1a1a;">Fail</div>
<svg class="i" style="left:1534.7px;top:646px" width="22" height="22" viewBox="0 0 22 22"><circle cx="11" cy="11" r="9" fill="none" stroke="#111" stroke-width="2.1"/><path d="M8.4 9 C8.4 7.1 9.5 6.2 11.1 6.2 C12.7 6.2 13.8 7.1 13.8 8.6 C13.8 10.5 11.3 10.6 11.3 12.9" fill="none" stroke="#111" stroke-width="2.4"/><rect x="10" y="14.3" width="2.6" height="2.3" fill="#111"/></svg>
<div class="a" style="left:245px;top:706px;width:1321px;height:290px;border:1px solid #dadada;border-radius:3px;background:#fdfdfd"></div>
<div class="a" style="left:252px;top:704px;width:134px;height:5px;background:#fbfbfb"></div>
<div class="t" style="left:255px;top:699.94px;font-size:14.6px;color:#303030;">Calendar Reminder</div>
<div class="t" style="right:1103px;top:724.71px;font-size:15.7px;color:#303030;">Attach Calendar Reminder:</div>
<div class="a" style="left:504px;top:719px;width:22px;height:22px;background:#1a86b0;border:1px solid #1f6e8c"></div>
<svg class="i" style="left:504px;top:719px" width="22" height="22" viewBox="0 0 22 22"><path d="M3.5 10.8 L8 15.2 L18.8 5" fill="none" stroke="#fff" stroke-width="3.1" stroke-linecap="round" stroke-linejoin="round"/></svg>
<svg class="i" style="left:1534.7px;top:718.6px" width="22" height="22" viewBox="0 0 22 22"><circle cx="11" cy="11" r="9" fill="none" stroke="#111" stroke-width="2.1"/><path d="M8.4 9 C8.4 7.1 9.5 6.2 11.1 6.2 C12.7 6.2 13.8 7.1 13.8 8.6 C13.8 10.5 11.3 10.6 11.3 12.9" fill="none" stroke="#111" stroke-width="2.4"/><rect x="10" y="14.3" width="2.6" height="2.3" fill="#111"/></svg>
<div class="t" style="right:1103px;top:758.71px;font-size:15.7px;color:#303030;">Calendar Subject:</div>
<div class="a" style="left:504px;top:746px;width:1025px;height:35px;border:1px solid #b0b0b0;border-top:2px solid #b8b8b8;border-bottom:2px solid #b8b8b8;background:#fff"></div>
<div class="t" style="left:513px;top:756.86px;font-size:17.3px;color:#1a1a1a;">ManagementStudio Sign-Off : [TestSignOff-TestType] - [TestSignOff-ItemName]</div>
<svg class="i" style="left:1534.7px;top:753.3px" width="22" height="22" viewBox="0 0 22 22"><circle cx="11" cy="11" r="9" fill="none" stroke="#111" stroke-width="2.1"/><path d="M8.4 9 C8.4 7.1 9.5 6.2 11.1 6.2 C12.7 6.2 13.8 7.1 13.8 8.6 C13.8 10.5 11.3 10.6 11.3 12.9" fill="none" stroke="#111" stroke-width="2.4"/><rect x="10" y="14.3" width="2.6" height="2.3" fill="#111"/></svg>
<div class="t" style="right:1103px;top:797.21px;font-size:15.7px;color:#303030;">Calendar Location:</div>
<div class="a" style="left:504px;top:784.5px;width:1025px;height:34.5px;border:1px solid #b0b0b0;border-top:2px solid #b8b8b8;border-bottom:2px solid #b8b8b8;background:#fff"></div>
<div class="t" style="left:513px;top:794.96px;font-size:17.3px;color:#1a1a1a;">[TestSignOff-Url-SignOff-8]</div>
<svg class="i" style="left:1534.7px;top:792px" width="22" height="22" viewBox="0 0 22 22"><circle cx="11" cy="11" r="9" fill="none" stroke="#111" stroke-width="2.1"/><path d="M8.4 9 C8.4 7.1 9.5 6.2 11.1 6.2 C12.7 6.2 13.8 7.1 13.8 8.6 C13.8 10.5 11.3 10.6 11.3 12.9" fill="none" stroke="#111" stroke-width="2.4"/><rect x="10" y="14.3" width="2.6" height="2.3" fill="#111"/></svg>
<div class="t" style="right:1103px;top:882.51px;font-size:15.7px;color:#303030;">Calendar Description:</div>
<div class="a" style="left:504px;top:822px;width:1025px;height:128px;border:1px solid #b0b0b0;border-top:2px solid #b8b8b8;border-bottom:2px solid #b8b8b8;background:#fff"></div>
<div class="t" style="left:513px;top:834.06px;font-size:17.3px;color:#1a1a1a;">Please sign-off the '[TestSignOff-TestType]' test for [TestSignOff-ItemName].</div>
<div class="t" style="left:513px;top:880.36px;font-size:17.3px;color:#1a1a1a;">[TestSignOff-Url-SignOff-8]</div>
<div class="t" style="left:513px;top:927.06px;font-size:17.3px;color:#1a1a1a;">Notes:[TestSignOff-NotesToTester]</div>
<svg class="i" style="left:1534.7px;top:877.3px" width="22" height="22" viewBox="0 0 22 22"><circle cx="11" cy="11" r="9" fill="none" stroke="#111" stroke-width="2.1"/><path d="M8.4 9 C8.4 7.1 9.5 6.2 11.1 6.2 C12.7 6.2 13.8 7.1 13.8 8.6 C13.8 10.5 11.3 10.6 11.3 12.9" fill="none" stroke="#111" stroke-width="2.4"/><rect x="10" y="14.3" width="2.6" height="2.3" fill="#111"/></svg>
<div class="t" style="right:1103px;top:965.71px;font-size:15.7px;color:#303030;">Calendar Reminder X Min:</div>
<div class="a" style="left:503px;top:953.5px;width:157px;height:33px;border:1px solid #b4b4b4;background:#fff"></div>
<div class="a" style="left:592px;top:954.5px;width:67px;height:31px;background:#e1e1e1"></div>
<div class="a" style="left:592px;top:953.5px;width:1px;height:33px;background:#c0c0c0"></div>
<div class="a" style="left:625px;top:953.5px;width:1px;height:33px;background:#c0c0c0"></div>
<div class="t" style="right:1015px;top:963.11px;font-size:17px;color:#707070;">15</div>
<svg class="i" style="left:603.0px;top:964.5px" width="12" height="7" viewBox="0 0 12 7"><path d="M0.8 0.8 L6.0 6.2 L11.2 0.8" fill="none" stroke="#333" stroke-width="2"/></svg>
<svg class="i" style="left:636.5px;top:964.5px" width="12" height="7" viewBox="0 0 12 7"><path d="M0.8 6.2 L6.0 0.8 L11.2 6.2" fill="none" stroke="#333" stroke-width="2"/></svg>
<svg class="i" style="left:1534.7px;top:959.9px" width="22" height="22" viewBox="0 0 22 22"><circle cx="11" cy="11" r="9" fill="none" stroke="#111" stroke-width="2.1"/><path d="M8.4 9 C8.4 7.1 9.5 6.2 11.1 6.2 C12.7 6.2 13.8 7.1 13.8 8.6 C13.8 10.5 11.3 10.6 11.3 12.9" fill="none" stroke="#111" stroke-width="2.4"/><rect x="10" y="14.3" width="2.6" height="2.3" fill="#111"/></svg>
<div class="a" style="left:245px;top:1019px;width:1321px;height:118px;border:1px solid #dadada;border-radius:3px;background:#fdfdfd"></div>
<div class="a" style="left:252px;top:1017px;width:98px;height:5px;background:#fbfbfb"></div>
<div class="t" style="left:255px;top:1012.94px;font-size:14.6px;color:#303030;">Misc. Options</div>
<div class="t" style="right:1103px;top:1038.71px;font-size:15.7px;color:#303030;">Save Test As PDF:</div>
<div class="a" style="left:504px;top:1032.5px;width:22px;height:22px;background:#1a86b0;border:1px solid #1f6e8c"></div>
<svg class="i" style="left:504px;top:1032.5px" width="22" height="22" viewBox="0 0 22 22"><path d="M3.5 10.8 L8 15.2 L18.8 5" fill="none" stroke="#fff" stroke-width="3.1" stroke-linecap="round" stroke-linejoin="round"/></svg>
<svg class="i" style="left:1534.7px;top:1032.5px" width="22" height="22" viewBox="0 0 22 22"><circle cx="11" cy="11" r="9" fill="none" stroke="#111" stroke-width="2.1"/><path d="M8.4 9 C8.4 7.1 9.5 6.2 11.1 6.2 C12.7 6.2 13.8 7.1 13.8 8.6 C13.8 10.5 11.3 10.6 11.3 12.9" fill="none" stroke="#111" stroke-width="2.4"/><rect x="10" y="14.3" width="2.6" height="2.3" fill="#111"/></svg>
<div class="t" style="right:1103px;top:1071.71px;font-size:15.7px;color:#303030;">PDF Attachment Type:</div>
<div class="a" style="left:504px;top:1059.5px;width:250px;height:32px;border:1px solid #ababab;background:linear-gradient(#efefef,#e2e2e2)"></div>
<svg class="i" style="left:738.5px;top:1072.0px" width="8" height="5" viewBox="0 0 8 5"><path d="M0.8 0.8 L4.0 4.2 L7.2 0.8" fill="none" stroke="#444" stroke-width="1.4"/></svg>
<svg class="i" style="left:1534.7px;top:1065px" width="22" height="22" viewBox="0 0 22 22"><circle cx="11" cy="11" r="9" fill="none" stroke="#111" stroke-width="2.1"/><path d="M8.4 9 C8.4 7.1 9.5 6.2 11.1 6.2 C12.7 6.2 13.8 7.1 13.8 8.6 C13.8 10.5 11.3 10.6 11.3 12.9" fill="none" stroke="#111" stroke-width="2.4"/><rect x="10" y="14.3" width="2.6" height="2.3" fill="#111"/></svg>
<div class="t" style="right:1103px;top:1107.71px;font-size:15.7px;color:#303030;">Test Attachments Type:</div>
<div class="a" style="left:504px;top:1095.5px;width:250px;height:32px;border:1px solid #ababab;background:linear-gradient(#efefef,#e2e2e2)"></div>
<div class="t" style="left:510px;top:1104.36px;font-size:17.3px;color:#1a1a1a;">App Test User Attachment</div>
<svg class="i" style="left:738.5px;top:1108.0px" width="8" height="5" viewBox="0 0 8 5"><path d="M0.8 0.8 L4.0 4.2 L7.2 0.8" fill="none" stroke="#444" stroke-width="1.4"/></svg>
<svg class="i" style="left:1534.7px;top:1100.7px" width="22" height="22" viewBox="0 0 22 22"><circle cx="11" cy="11" r="9" fill="none" stroke="#111" stroke-width="2.1"/><path d="M8.4 9 C8.4 7.1 9.5 6.2 11.1 6.2 C12.7 6.2 13.8 7.1 13.8 8.6 C13.8 10.5 11.3 10.6 11.3 12.9" fill="none" stroke="#111" stroke-width="2.4"/><rect x="10" y="14.3" width="2.6" height="2.3" fill="#111"/></svg>
<div class="a" style="left:91px;top:187px;width:1503px;height:44px;background:#fdfdfd"></div>
<div class="a" style="left:91px;top:230px;width:1503px;height:1px;background:#d0d0d0"></div>
<div class="a" style="left:98px;top:192px;width:145px;height:35px;border:1px solid #8a9cb0;background:#6592c8"></div>
<svg class="i" style="left:109px;top:200px" width="19" height="19" viewBox="0 0 19 19"><path d="M2 3.5 C2 2.5 2.5 2 3.5 2 H13.5 L17 5.5 V15.5 C17 16.5 16.5 17 15.5 17 H3.5 C2.5 17 2 16.5 2 15.5 Z" fill="none" stroke="#fff" stroke-width="1.9"/><path d="M6 2 V6.5 H12 V2" fill="none" stroke="#fff" stroke-width="1.7"/><circle cx="9.5" cy="11.8" r="2.2" fill="#fff"/></svg>
<div class="t" style="left:130px;top:204.14px;font-size:14.6px;color:#fff;letter-spacing:-0.3px">Save Changes</div>
<div class="a" style="left:248px;top:192px;width:161px;height:35px;border:1px solid #d2d2d2;background:#fcfcfc"></div>
<svg class="i" style="left:260px;top:200px" width="20" height="20" viewBox="0 0 20 20"><circle cx="10" cy="10" r="8" fill="none" stroke="#111" stroke-width="2"/><path d="M4.4 4.4 L15.6 15.6" stroke="#111" stroke-width="2"/></svg>
<div class="t" style="left:283px;top:203.97px;font-size:14.8px;color:#222;letter-spacing:-0.35px">Cancel Changes</div>
<div class="a" style="left:414px;top:190px;width:1px;height:40px;background:#d8d8d8"></div>
<div class="a" style="left:420px;top:192px;width:175px;height:35px;border:1px solid #d2d2d2;background:#fcfcfc"></div>
<svg class="i" style="left:433px;top:201px" width="19" height="19" viewBox="0 0 19 19"><path d="M6 1.2 H13 L17.8 6 V13 L13 17.8 H6 L1.2 13 V6 Z" fill="none" stroke="#111" stroke-width="1.9" stroke-linejoin="round"/><path d="M9.5 5.3 V13.7 M5.3 9.5 H13.7" stroke="#111" stroke-width="1.9"/></svg>
<div class="t" style="left:455px;top:203.97px;font-size:14.8px;color:#222;letter-spacing:-0.15px">New Test Sign-Off</div>
<div class="a" style="left:600px;top:190px;width:1px;height:40px;background:#d8d8d8"></div>
<div class="a" style="left:606px;top:192px;width:143px;height:35px;border:1px solid #d2d2d2;background:#fcfcfc"></div>
<svg class="i" style="left:617px;top:200px" width="17" height="20" viewBox="0 0 17 20"><path d="M2.5 2 H10 L14.5 6.5 V18 H2.5 Z" fill="none" stroke="#111" stroke-width="1.9" stroke-linejoin="round"/><path d="M9.5 2 V7 H14.5" fill="none" stroke="#111" stroke-width="1.5"/><path d="M8.5 8.5 V14.5 M6 12 L8.5 14.5 L11 12" fill="none" stroke="#111" stroke-width="1.7"/></svg>
<div class="t" style="left:636px;top:203.97px;font-size:14.8px;color:#222;letter-spacing:-0.2px">Export Survey</div>
<div class="a" style="left:754px;top:192px;width:185px;height:35px;border:1px solid #c9c9c9;background:#d5575b"></div>
<svg class="i" style="left:765px;top:199px" width="18" height="21" viewBox="0 0 18 21"><path d="M1.5 4.5 H16.5 M6 4.5 V2 H12 V4.5" fill="none" stroke="#fff" stroke-width="1.9"/><path d="M3.5 5 L4.5 18.5 H13.5 L14.5 5" fill="none" stroke="#fff" stroke-width="2.2" stroke-linejoin="round"/></svg>
<div class="t" style="left:785px;top:203.97px;font-size:14.8px;color:#fff;letter-spacing:0.08px">Delete Test Sign-Off</div>
<svg class="i" style="left:679px;top:975px" width="10" height="15" viewBox="0 0 10 15"><path d="M0.5 0.5 V11.5 L3 9.2 L5.2 14.2 L7 13.4 L5 8.6 L8.8 8.4 Z" fill="#000"/></svg>
</body></html>
